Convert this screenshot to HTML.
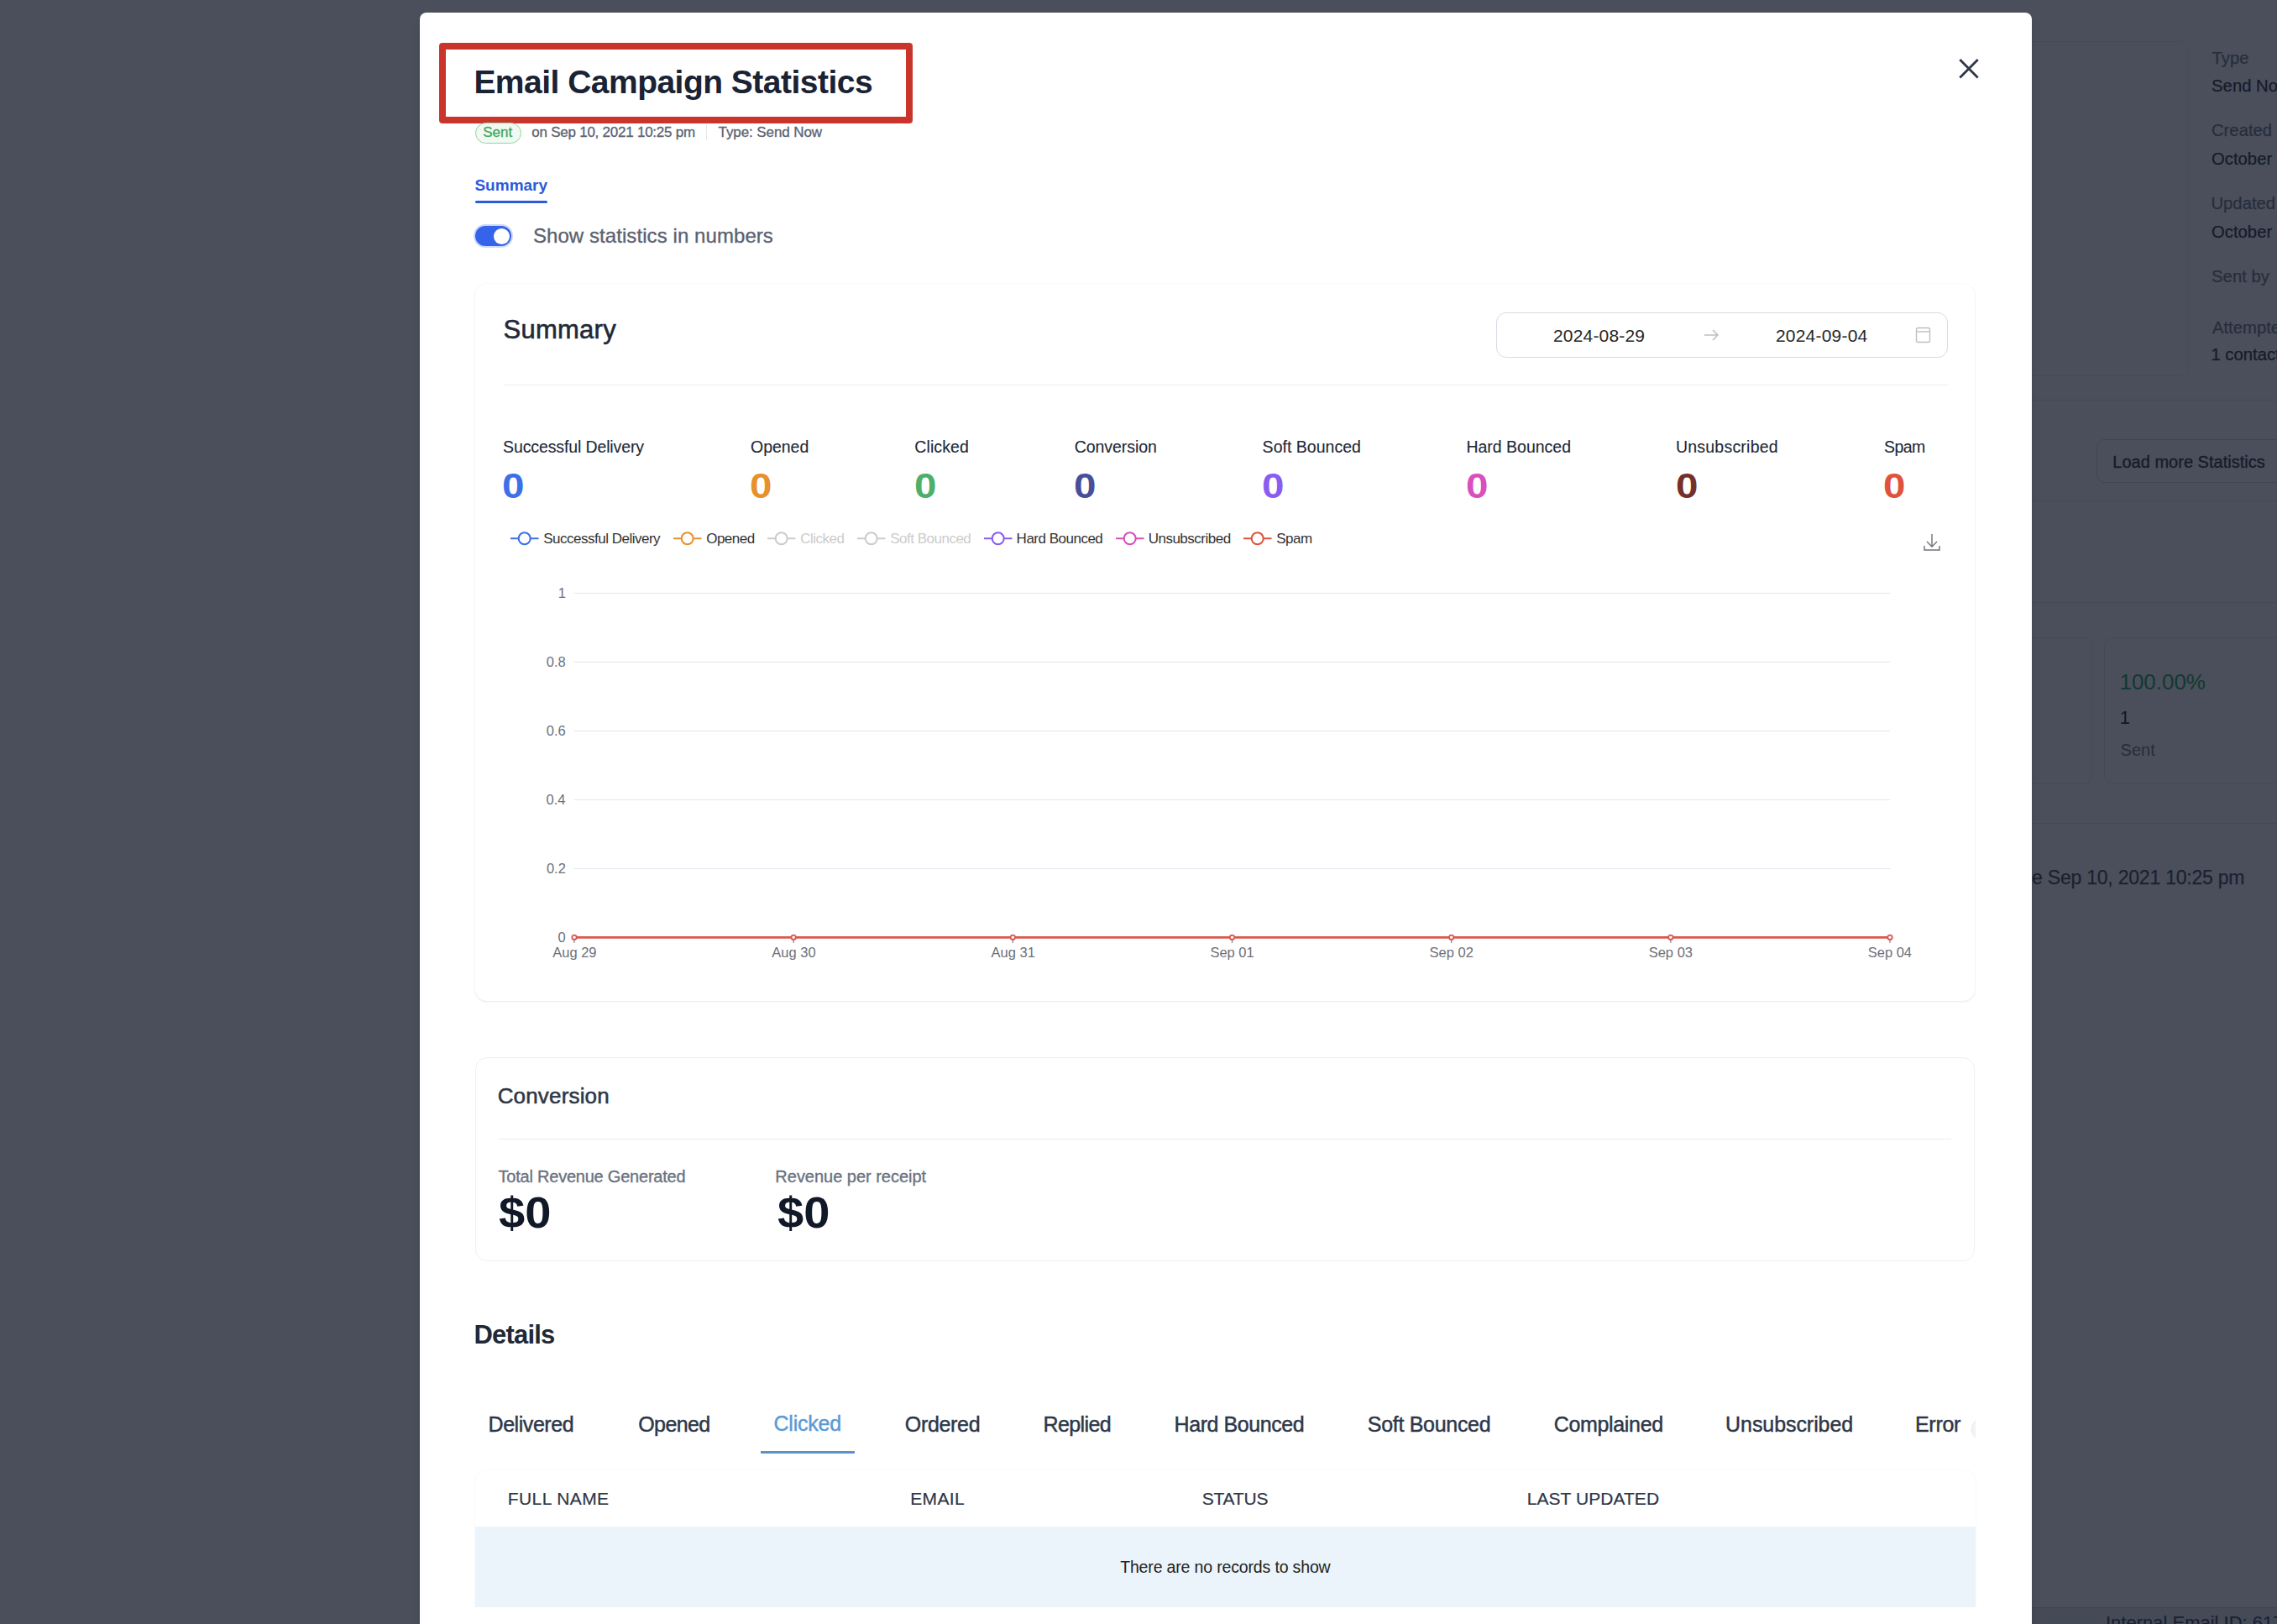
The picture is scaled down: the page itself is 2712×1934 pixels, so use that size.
<!DOCTYPE html><html><head><meta charset="utf-8"><style>
html,body{margin:0;padding:0;}
body{width:2712px;height:1934px;position:relative;overflow:hidden;background:#fff;font-family:"Liberation Sans",sans-serif;}
.t{position:absolute;white-space:nowrap;line-height:1;}
.r{position:absolute;}
</style></head><body>
<div class="r" style="left:2380px;top:49px;width:227px;height:399px;background:#fff;border:1.5px solid #eceef1;border-radius:10px;box-sizing:border-box;"></div>
<div class="t" style="left:2634.54px;top:58.81px;font-size:20.3px;color:#6b7280;-webkit-text-stroke:0.25px #6b7280;">Type</div>
<div class="t" style="left:2634.08px;top:92.31px;font-size:20.3px;color:#1f2937;-webkit-text-stroke:0.25px #1f2937;">Send Now</div>
<div class="t" style="left:2633.97px;top:145.41px;font-size:20.3px;color:#6b7280;-webkit-text-stroke:0.25px #6b7280;">Created</div>
<div class="t" style="left:2634.04px;top:178.81px;font-size:20.3px;color:#1f2937;-webkit-text-stroke:0.25px #1f2937;">October</div>
<div class="t" style="left:2633.43px;top:231.81px;font-size:20.3px;color:#6b7280;-webkit-text-stroke:0.25px #6b7280;">Updated</div>
<div class="t" style="left:2634.04px;top:265.81px;font-size:20.3px;color:#1f2937;-webkit-text-stroke:0.25px #1f2937;">October</div>
<div class="t" style="left:2634.08px;top:318.81px;font-size:20.3px;color:#6b7280;-webkit-text-stroke:0.25px #6b7280;">Sent by</div>
<div class="t" style="left:2634.96px;top:379.51px;font-size:20.3px;color:#6b7280;-webkit-text-stroke:0.25px #6b7280;">Attempted</div>
<div class="t" style="left:2633.45px;top:411.81px;font-size:20.3px;color:#1f2937;-webkit-text-stroke:0.25px #1f2937;">1 contact</div>
<div class="r" style="left:2420px;top:476px;width:292px;height:1px;background:#e5e7eb;"></div>
<div class="r" style="left:2497px;top:523px;width:243px;height:52px;border:1.5px solid #d1d5db;border-radius:9px;box-sizing:border-box;background:#fff;"></div>
<div class="t" style="left:2516.36px;top:540.07px;font-size:20px;color:#1f2937;letter-spacing:0.009px;-webkit-text-stroke:0.35px #1f2937;">Load more Statistics</div>
<div class="r" style="left:2420px;top:596px;width:292px;height:1px;background:#e5e7eb;"></div>
<div class="r" style="left:2420px;top:717px;width:292px;height:1px;background:#e5e7eb;"></div>
<div class="r" style="left:2380px;top:759px;width:112px;height:175px;border:1.5px solid #e5e7eb;border-radius:10px;box-sizing:border-box;background:#fff;"></div>
<div class="r" style="left:2506px;top:759px;width:254px;height:175px;border:1.5px solid #e5e7eb;border-radius:10px;box-sizing:border-box;background:#fff;"></div>
<div class="t" style="left:2524.52px;top:799.49px;font-size:26px;color:#16a34a;letter-spacing:-0.039px;">100.00%</div>
<div class="t" style="left:2524.82px;top:844.37px;font-size:22px;color:#111827;">1</div>
<div class="t" style="left:2525.59px;top:882.57px;font-size:20px;color:#6b7280;">Sent</div>
<div class="r" style="left:2420px;top:980px;width:292px;height:1px;background:#e5e7eb;"></div>
<div class="t" style="left:2420.02px;top:1033.53px;font-size:23px;color:#374151;letter-spacing:-0.219px;-webkit-text-stroke:0.25px #374151;">e Sep 10, 2021 10:25 pm</div>
<div class="r" style="left:2420px;top:1914px;width:292px;height:20px;background:#e9eaee;border-top:1px solid #d1d5db;box-sizing:border-box;"></div>
<div class="t" style="left:2507.97px;top:1922.37px;font-size:22px;color:#374151;-webkit-text-stroke:0.2px #374151;">Internal Email ID: 61723</div>
<div class="r" style="left:0px;top:0px;width:2712px;height:1934px;background:rgba(17,24,39,0.76);"></div>
<div class="r" style="left:500px;top:15px;width:1920px;height:1945px;background:#fff;border-radius:8px;box-shadow:0 10px 15px -3px rgba(0,0,0,0.1),0 4px 6px -2px rgba(0,0,0,0.05);"></div>
<div class="r" style="left:523px;top:51px;width:564px;height:95.6px;border:8px solid #c9352a;border-radius:4px;box-sizing:border-box;"></div>
<div class="t" style="left:564.39px;top:77.98px;font-size:39px;color:#1a2233;font-weight:bold;letter-spacing:-0.518px;">Email Campaign Statistics</div>
<svg class="r" style="left:2326px;top:63px" width="38" height="38" viewBox="0 0 38 38"><path d="M8.3 8L29.7 29.5M29.7 8L8.3 29.5" stroke="#2d3748" stroke-width="2.8" stroke-linecap="butt"/></svg>
<div class="r" style="left:566px;top:146px;width:55px;height:25px;border:1.5px solid #8fd6a2;background:#f0faf3;border-radius:13px;box-sizing:border-box;"></div>
<div class="t" style="left:575.23px;top:148.61px;font-size:17px;color:#3fa760;letter-spacing:-0.025px;-webkit-text-stroke:0.3px #3fa760;">Sent</div>
<div class="t" style="left:633.29px;top:148.61px;font-size:17px;color:#5b6271;letter-spacing:-0.241px;-webkit-text-stroke:0.3px #5b6271;">on Sep 10, 2021 10:25 pm</div>
<div class="r" style="left:841px;top:148px;width:1px;height:19px;background:#e5e7eb;"></div>
<div class="t" style="left:855.62px;top:148.61px;font-size:17px;color:#5b6271;letter-spacing:-0.103px;-webkit-text-stroke:0.3px #5b6271;">Type: Send Now</div>
<div class="t" style="left:565.45px;top:210.91px;font-size:19px;color:#2c5bd6;font-weight:bold;letter-spacing:0.009px;">Summary</div>
<div class="r" style="left:566px;top:239px;width:86px;height:3px;background:#2c5bd6;border-radius:2px;"></div>
<div class="r" style="left:566px;top:269px;width:43px;height:24px;background:#3563e9;border-radius:12px;box-shadow:0 0 0 2px #cdd9fa;"></div>
<div class="r" style="left:588px;top:271.5px;width:19px;height:19px;border-radius:50%;background:#fff;"></div>
<div class="t" style="left:634.91px;top:269.28px;font-size:24px;color:#5b6271;letter-spacing:0.074px;-webkit-text-stroke:0.35px #5b6271;">Show statistics in numbers</div>
<div class="r" style="left:566px;top:338px;width:1786px;height:854px;border-radius:14px;box-sizing:border-box;box-shadow:0 1px 3px rgba(0,0,0,0.09), 0 0 1px rgba(0,0,0,0.06);"></div>
<div class="t" style="left:599.59px;top:376.75px;font-size:31px;color:#1f2937;letter-spacing:0.240px;-webkit-text-stroke:0.6px #1f2937;">Summary</div>
<div class="r" style="left:600px;top:458px;width:1720px;height:1px;background:#e9ebef;"></div>
<div class="r" style="left:1782px;top:372px;width:538px;height:54px;border:1.5px solid #d9dbe3;border-radius:12px;box-sizing:border-box;"></div>
<div class="t" style="left:1849.94px;top:388.62px;font-size:21px;color:#262626;letter-spacing:0.181px;">2024-08-29</div>
<div class="t" style="left:2114.94px;top:388.62px;font-size:21px;color:#262626;letter-spacing:0.206px;">2024-09-04</div>
<svg class="r" style="left:2026px;top:388px" width="24" height="22" viewBox="0 0 24 22"><path d="M4 11H20M14 5L20 11L14 17" fill="none" stroke="#bfbfbf" stroke-width="1.6"/></svg>
<svg class="r" style="left:2280px;top:388px" width="22" height="22" viewBox="0 0 22 22"><rect x="2.5" y="2.5" width="16" height="17" rx="2" fill="none" stroke="#bfbfbf" stroke-width="1.4"/><path d="M2.5 7H18.5" stroke="#bfbfbf" stroke-width="1.4"/></svg>
<div class="t" style="left:599.11px;top:523.49px;font-size:19.5px;color:#1f2937;letter-spacing:-0.123px;-webkit-text-stroke:0.12px #1f2937;">Successful Delivery</div>
<div class="t" style="left:598.32px;top:558.02px;font-size:42.5px;color:#3d6fe8;font-weight:bold;transform:scaleX(1.12);transform-origin:0 0;">0</div>
<div class="t" style="left:894.08px;top:523.49px;font-size:19.5px;color:#1f2937;letter-spacing:-0.042px;-webkit-text-stroke:0.12px #1f2937;">Opened</div>
<div class="t" style="left:893.32px;top:558.02px;font-size:42.5px;color:#e8902c;font-weight:bold;transform:scaleX(1.12);transform-origin:0 0;">0</div>
<div class="t" style="left:1089.31px;top:523.49px;font-size:19.5px;color:#1f2937;letter-spacing:0.102px;-webkit-text-stroke:0.12px #1f2937;">Clicked</div>
<div class="t" style="left:1088.62px;top:558.02px;font-size:42.5px;color:#4caf6a;font-weight:bold;transform:scaleX(1.12);transform-origin:0 0;">0</div>
<div class="t" style="left:1279.71px;top:523.49px;font-size:19.5px;color:#1f2937;letter-spacing:-0.053px;-webkit-text-stroke:0.12px #1f2937;">Conversion</div>
<div class="t" style="left:1279.02px;top:558.02px;font-size:42.5px;color:#474f9b;font-weight:bold;transform:scaleX(1.12);transform-origin:0 0;">0</div>
<div class="t" style="left:1503.61px;top:523.49px;font-size:19.5px;color:#1f2937;letter-spacing:0.023px;-webkit-text-stroke:0.12px #1f2937;">Soft Bounced</div>
<div class="t" style="left:1502.82px;top:558.02px;font-size:42.5px;color:#8a5cf0;font-weight:bold;transform:scaleX(1.12);transform-origin:0 0;">0</div>
<div class="t" style="left:1746.40px;top:523.49px;font-size:19.5px;color:#1f2937;-webkit-text-stroke:0.12px #1f2937;">Hard Bounced</div>
<div class="t" style="left:1746.32px;top:558.02px;font-size:42.5px;color:#d94fbe;font-weight:bold;transform:scaleX(1.12);transform-origin:0 0;">0</div>
<div class="t" style="left:1995.90px;top:523.49px;font-size:19.5px;color:#1f2937;letter-spacing:0.230px;-webkit-text-stroke:0.12px #1f2937;">Unsubscribed</div>
<div class="t" style="left:1995.72px;top:558.02px;font-size:42.5px;color:#76302a;font-weight:bold;transform:scaleX(1.12);transform-origin:0 0;">0</div>
<div class="t" style="left:2243.91px;top:523.49px;font-size:19.5px;color:#1f2937;letter-spacing:-0.523px;-webkit-text-stroke:0.12px #1f2937;">Spam</div>
<div class="t" style="left:2243.12px;top:558.02px;font-size:42.5px;color:#e0533a;font-weight:bold;transform:scaleX(1.12);transform-origin:0 0;">0</div>
<svg class="r" style="left:608px;top:630px" width="35" height="24" viewBox="0 0 35 24"><path d="M0 11.25H33.5" stroke="#3d6fe8" stroke-width="2.1"/><circle cx="16.7" cy="11.25" r="7" fill="#fff" stroke="#3d6fe8" stroke-width="2.1"/></svg>
<div class="t" style="left:647.23px;top:633.11px;font-size:17px;color:#333;letter-spacing:-0.500px;">Successful Delivery</div>
<svg class="r" style="left:802px;top:630px" width="35" height="24" viewBox="0 0 35 24"><path d="M0 11.25H33.5" stroke="#e8902c" stroke-width="2.1"/><circle cx="16.7" cy="11.25" r="7" fill="#fff" stroke="#e8902c" stroke-width="2.1"/></svg>
<div class="t" style="left:841.19px;top:633.11px;font-size:17px;color:#333;letter-spacing:-0.500px;">Opened</div>
<svg class="r" style="left:914px;top:630px" width="35" height="24" viewBox="0 0 35 24"><path d="M0 11.25H33.5" stroke="#cccccc" stroke-width="2.1"/><circle cx="16.7" cy="11.25" r="7" fill="#fff" stroke="#cccccc" stroke-width="2.1"/></svg>
<div class="t" style="left:953.14px;top:633.11px;font-size:17px;color:#cccccc;letter-spacing:-0.500px;">Clicked</div>
<svg class="r" style="left:1021px;top:630px" width="35" height="24" viewBox="0 0 35 24"><path d="M0 11.25H33.5" stroke="#cccccc" stroke-width="2.1"/><circle cx="16.7" cy="11.25" r="7" fill="#fff" stroke="#cccccc" stroke-width="2.1"/></svg>
<div class="t" style="left:1060.23px;top:633.11px;font-size:17px;color:#cccccc;letter-spacing:-0.500px;">Soft Bounced</div>
<svg class="r" style="left:1172px;top:630px" width="35" height="24" viewBox="0 0 35 24"><path d="M0 11.25H33.5" stroke="#8a5cf0" stroke-width="2.1"/><circle cx="16.7" cy="11.25" r="7" fill="#fff" stroke="#8a5cf0" stroke-width="2.1"/></svg>
<div class="t" style="left:1210.61px;top:633.11px;font-size:17px;color:#333;letter-spacing:-0.500px;">Hard Bounced</div>
<svg class="r" style="left:1329px;top:630px" width="35" height="24" viewBox="0 0 35 24"><path d="M0 11.25H33.5" stroke="#d94fbe" stroke-width="2.1"/><circle cx="16.7" cy="11.25" r="7" fill="#fff" stroke="#d94fbe" stroke-width="2.1"/></svg>
<div class="t" style="left:1367.69px;top:633.11px;font-size:17px;color:#333;letter-spacing:-0.500px;">Unsubscribed</div>
<svg class="r" style="left:1481px;top:630px" width="35" height="24" viewBox="0 0 35 24"><path d="M0 11.25H33.5" stroke="#e0533a" stroke-width="2.1"/><circle cx="16.7" cy="11.25" r="7" fill="#fff" stroke="#e0533a" stroke-width="2.1"/></svg>
<div class="t" style="left:1520.23px;top:633.11px;font-size:17px;color:#333;letter-spacing:-0.500px;">Spam</div>
<svg class="r" style="left:2289px;top:634px" width="24" height="24" viewBox="0 0 24 24"><path d="M12 2V17M6 11L12 17L18 11M3 16V21H21V16" fill="none" stroke="#6e7079" stroke-width="1.4"/></svg>
<div class="r" style="left:684px;top:705.75px;width:1567px;height:1.5px;background:#e0e5ef;"></div>
<div class="t" style="left:664.63px;top:698.03px;font-size:16.5px;color:#6e7079;">1</div>
<div class="r" style="left:684px;top:787.75px;width:1567px;height:1.5px;background:#e0e5ef;"></div>
<div class="t" style="left:650.78px;top:780.03px;font-size:16.5px;color:#6e7079;">0.8</div>
<div class="r" style="left:684px;top:869.75px;width:1567px;height:1.5px;background:#e0e5ef;"></div>
<div class="t" style="left:650.79px;top:862.03px;font-size:16.5px;color:#6e7079;">0.6</div>
<div class="r" style="left:684px;top:951.75px;width:1567px;height:1.5px;background:#e0e5ef;"></div>
<div class="t" style="left:650.55px;top:944.03px;font-size:16.5px;color:#6e7079;">0.4</div>
<div class="r" style="left:684px;top:1033.75px;width:1567px;height:1.5px;background:#e0e5ef;"></div>
<div class="t" style="left:650.89px;top:1026.03px;font-size:16.5px;color:#6e7079;">0.2</div>
<div class="t" style="left:664.47px;top:1108.03px;font-size:16.5px;color:#6e7079;">0</div>
<div class="t" style="left:658.23px;top:1126.03px;font-size:16.5px;color:#6e7079;">Aug 29</div>
<div class="t" style="left:919.33px;top:1126.03px;font-size:16.5px;color:#6e7079;">Aug 30</div>
<div class="t" style="left:1180.58px;top:1126.03px;font-size:16.5px;color:#6e7079;">Aug 31</div>
<div class="t" style="left:1441.39px;top:1126.03px;font-size:16.5px;color:#6e7079;">Sep 01</div>
<div class="t" style="left:1702.57px;top:1126.03px;font-size:16.5px;color:#6e7079;">Sep 02</div>
<div class="t" style="left:1963.69px;top:1126.03px;font-size:16.5px;color:#6e7079;">Sep 03</div>
<div class="t" style="left:2224.74px;top:1126.03px;font-size:16.5px;color:#6e7079;">Sep 04</div>
<svg class="r" style="left:600px;top:1100px" width="1700" height="30" viewBox="600 1100 1700 30"><path d="M684 1116.3H2251" stroke="#d9574b" stroke-width="2.8"/><path d="M684.00 1119.5V1123" stroke="#8a8d94" stroke-width="1.3"/><circle cx="684.00" cy="1116.3" r="2.7" fill="#fff" stroke="#d9574b" stroke-width="1.8"/><path d="M945.17 1119.5V1123" stroke="#8a8d94" stroke-width="1.3"/><circle cx="945.17" cy="1116.3" r="2.7" fill="#fff" stroke="#d9574b" stroke-width="1.8"/><path d="M1206.34 1119.5V1123" stroke="#8a8d94" stroke-width="1.3"/><circle cx="1206.34" cy="1116.3" r="2.7" fill="#fff" stroke="#d9574b" stroke-width="1.8"/><path d="M1467.51 1119.5V1123" stroke="#8a8d94" stroke-width="1.3"/><circle cx="1467.51" cy="1116.3" r="2.7" fill="#fff" stroke="#d9574b" stroke-width="1.8"/><path d="M1728.68 1119.5V1123" stroke="#8a8d94" stroke-width="1.3"/><circle cx="1728.68" cy="1116.3" r="2.7" fill="#fff" stroke="#d9574b" stroke-width="1.8"/><path d="M1989.85 1119.5V1123" stroke="#8a8d94" stroke-width="1.3"/><circle cx="1989.85" cy="1116.3" r="2.7" fill="#fff" stroke="#d9574b" stroke-width="1.8"/><path d="M2251.02 1119.5V1123" stroke="#8a8d94" stroke-width="1.3"/><circle cx="2251.02" cy="1116.3" r="2.7" fill="#fff" stroke="#d9574b" stroke-width="1.8"/></svg>
<div class="r" style="left:566px;top:1259px;width:1786px;height:243px;border:1.5px solid #eef0f3;border-radius:14px;box-sizing:border-box;"></div>
<div class="t" style="left:592.68px;top:1292.39px;font-size:26px;color:#2d3748;letter-spacing:0.166px;-webkit-text-stroke:0.55px #2d3748;">Conversion</div>
<div class="r" style="left:594px;top:1355.5px;width:1730px;height:1.0px;background:#e9ebef;"></div>
<div class="t" style="left:593.55px;top:1391.07px;font-size:20px;color:#6b7280;letter-spacing:-0.223px;-webkit-text-stroke:0.35px #6b7280;">Total Revenue Generated</div>
<div class="t" style="left:594.33px;top:1419.32px;font-size:51px;color:#111827;font-weight:bold;transform:scaleX(1.1);transform-origin:0 0;">$0</div>
<div class="t" style="left:923.36px;top:1391.07px;font-size:20px;color:#6b7280;letter-spacing:-0.018px;-webkit-text-stroke:0.35px #6b7280;">Revenue per receipt</div>
<div class="t" style="left:926.33px;top:1419.32px;font-size:51px;color:#111827;font-weight:bold;transform:scaleX(1.1);transform-origin:0 0;">$0</div>
<div class="t" style="left:564.53px;top:1574.25px;font-size:31px;color:#1f2937;font-weight:bold;letter-spacing:-0.819px;">Details</div>
<div class="t" style="left:581.55px;top:1683.83px;font-size:25px;color:#2d3748;letter-spacing:-0.443px;-webkit-text-stroke:0.45px #2d3748;">Delivered</div>
<div class="t" style="left:760.32px;top:1683.83px;font-size:25px;color:#2d3748;letter-spacing:-0.634px;-webkit-text-stroke:0.45px #2d3748;">Opened</div>
<div class="t" style="left:921.43px;top:1682.83px;font-size:25px;color:#5a9bd5;letter-spacing:-0.198px;-webkit-text-stroke:0.45px #5a9bd5;">Clicked</div>
<div class="t" style="left:1077.82px;top:1683.83px;font-size:25px;color:#2d3748;letter-spacing:-0.319px;-webkit-text-stroke:0.45px #2d3748;">Ordered</div>
<div class="t" style="left:1242.45px;top:1683.83px;font-size:25px;color:#2d3748;letter-spacing:-0.603px;-webkit-text-stroke:0.45px #2d3748;">Replied</div>
<div class="t" style="left:1398.55px;top:1683.83px;font-size:25px;color:#2d3748;letter-spacing:-0.433px;-webkit-text-stroke:0.45px #2d3748;">Hard Bounced</div>
<div class="t" style="left:1628.86px;top:1683.83px;font-size:25px;color:#2d3748;letter-spacing:-0.306px;-webkit-text-stroke:0.45px #2d3748;">Soft Bounced</div>
<div class="t" style="left:1850.73px;top:1683.83px;font-size:25px;color:#2d3748;letter-spacing:-0.337px;-webkit-text-stroke:0.45px #2d3748;">Complained</div>
<div class="t" style="left:2055.07px;top:1683.83px;font-size:25px;color:#2d3748;letter-spacing:-0.065px;-webkit-text-stroke:0.45px #2d3748;">Unsubscribed</div>
<div class="t" style="left:2280.95px;top:1683.83px;font-size:25px;color:#2d3748;letter-spacing:-0.272px;-webkit-text-stroke:0.45px #2d3748;">Error</div>
<div class="r" style="left:906px;top:1728px;width:112px;height:3px;background:#5b93c9;"></div>
<div class="r" style="left:2300px;top:1680px;width:53px;height:44px;overflow:hidden;"><div class="r" style="left:48px;top:8px;width:26px;height:26px;border-radius:50%;background:#f3f4f6;border:1px solid #e5e7eb;"></div></div>
<div class="r" style="left:566px;top:1751px;width:1787px;height:209px;border-radius:14px;box-sizing:border-box;box-shadow:0 0 2px rgba(0,0,0,0.07);"></div>
<div class="t" style="left:604.78px;top:1774.22px;font-size:21px;color:#2d3748;letter-spacing:0.408px;-webkit-text-stroke:0.2px #2d3748;">FULL NAME</div>
<div class="t" style="left:1084.28px;top:1774.22px;font-size:21px;color:#2d3748;letter-spacing:0.350px;-webkit-text-stroke:0.2px #2d3748;">EMAIL</div>
<div class="t" style="left:1431.75px;top:1774.22px;font-size:21px;color:#2d3748;letter-spacing:-0.205px;-webkit-text-stroke:0.2px #2d3748;">STATUS</div>
<div class="t" style="left:1818.78px;top:1774.22px;font-size:21px;color:#2d3748;letter-spacing:0.048px;-webkit-text-stroke:0.2px #2d3748;">LAST UPDATED</div>
<div class="r" style="left:566px;top:1818px;width:1787px;height:96px;background:#ebf4fa;"></div>
<div class="t" style="left:1334.16px;top:1857.49px;font-size:19.5px;color:#222;letter-spacing:-0.156px;">There are no records to show</div>
<div class="r" style="left:500px;top:1914px;width:1920px;height:20px;background:#fff;"></div>
</body></html>
